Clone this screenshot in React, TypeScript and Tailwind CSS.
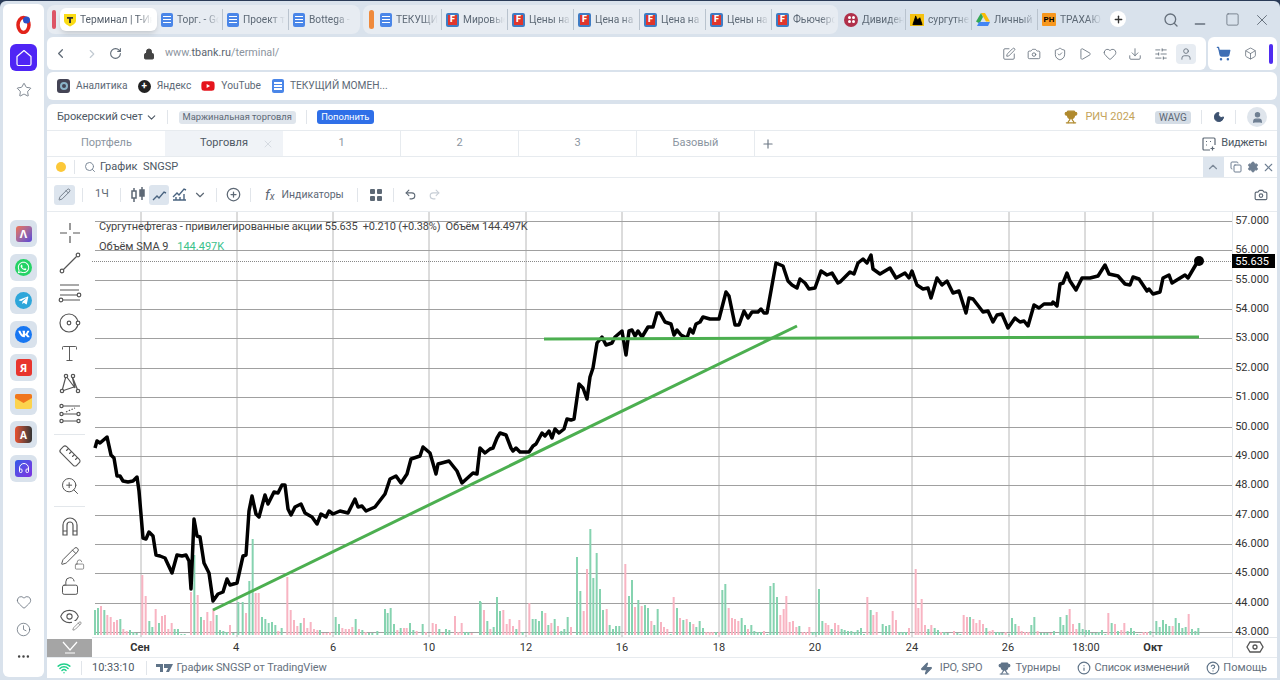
import {
  ChevronLeft, ChevronRight, ChevronDown, ChevronUp, RotateCw, Lock, SquarePen, Camera, ShieldCheck, Play, Heart,
  Download, SlidersHorizontal, User, ShoppingCart, Box, Search, Minus, Square, X, Plus, Star, Clock, Moon,
  Trophy, Copy, Settings, Pencil, Undo2, Redo2, Wifi, Zap, Info, CircleHelp, Type, ZoomIn, Ruler, LockOpen,
  Eye, CirclePlus, MoreHorizontal, Headphones, Mountain,
} from "lucide-react";
import { FaWhatsapp, FaTelegramPlane, FaVk, FaYoutube } from "react-icons/fa";

const termFont = "font-['Roboto',sans-serif]";

const linePts = "95,447 97,440 100,442 107,436 111,454 114,457 117,475 120,475 123,480 128,481 133,480 137,476 139,490 143,537 146,538 149,531 153,535 156,554 160,555 165,557 172,572 177,554 182,555 186,554 189,560 191,588 194,518 197,535 200,536 204,562 209,572 213,600 218,593 223,591 227,578 230,584 237,582 243,555 246,554 249,510 252,495 256,513 259,516 265,494 268,503 274,491 278,492 282,484 285,484 288,508 291,514 295,506 301,503 305,512 312,516 317,523 321,513 326,516 329,510 333,513 340,510 348,512 355,498 358,506 362,505 366,510 375,506 385,493 390,478 396,475 401,482 407,473 411,458 420,455 423,446 430,452 436,473 438,463 449,460 457,470 462,482 473,472 477,473 480,447 485,452 490,448 493,447 497,437 500,432 506,434 511,447 513,450 516,447 520,451 529,451 533,445 536,443 542,432 545,435 549,430 552,437 555,428 559,432 564,428 567,418 571,419 574,418 579,383 583,387 587,398 590,376 593,367 597,342 602,336 606,344 612,342 615,336 622,330 626,354 629,330 632,329 635,335 638,330 642,336 648,326 653,326 657,312 660,312 665,321 671,323 674,334 677,329 681,334 687,337 690,328 693,332 696,323 700,321 703,316 710,318 719,318 726,291 729,295 735,324 739,324 744,310 748,317 752,311 758,311 761,308 764,312 767,312 776,262 783,265 788,280 792,284 797,287 800,278 805,282 809,288 815,287 821,270 827,274 832,272 838,282 840,281 850,271 854,273 858,262 863,258 867,262 871,254 873,268 880,273 890,267 896,277 905,272 909,277 912,270 917,284 923,288 928,287 931,297 937,277 942,284 947,280 953,292 959,290 966,312 969,297 973,298 983,311 988,310 993,321 997,314 1002,313 1008,327 1015,317 1020,321 1024,320 1028,325 1034,304 1039,307 1044,303 1052,303 1053,301 1057,305 1060,283 1063,282 1067,272 1070,280 1076,289 1082,277 1090,277 1098,275 1105,264 1109,273 1118,275 1125,283 1130,284 1133,276 1139,278 1147,290 1149,288 1153,293 1160,291 1163,277 1169,274 1172,282 1185,274 1188,277 1198,260";

// volume bars: [x in 3x crop, height], negative = red candle
const barsA = [[15,25],[24,27],[33,-29],[43,25],[52,-20],[62,-18],[72,-13],[81,-15],[91,16],[100,-6],[110,-4],[120,5],[130,3],[140,2],[157,-60],[167,-39],[178,14],[187,8],[197,-26],[207,12],[216,-19],[225,-20],[235,-6],[245,-12],[254,6],[264,6],[274,1],[284,1],[303,-43],[313,80],[323,-40],[333,18],[342,-15],[352,-23],[362,-14],[370,-26],[380,20],[390,5],[400,4],[410,3],[420,-10],[430,2],[445,33],[458,33],[468,-22],[478,54],[488,96],[497,-42],[506,-42],[516,18],[526,16],[536,12],[546,13],[556,10],[565,-4],[575,7],[592,-58],[602,-25],[612,-15],[622,-9],[632,12],[642,-17],[652,-7],[662,-13],[672,-6],[682,-5],[690,5],[700,-2],[710,-2],[720,-3],[737,18],[747,11],[757,-7],[767,-6],[777,-6],[787,-8],[797,16],[807,-6],[817,5],[827,-3],[837,2],[847,2],[862,4],[885,26],[893,22],[902,27],[912,11],[922,-5],[932,7],[942,-7],[950,-7],[960,12],[970,5],[980,-4],[998,11],[1008,-3],[1028,-12],[1038,-11],[1048,6],[1058,-2],[1068,6],[1078,5],[1095,-19],[1105,-3],[1115,-12],[1125,3],[1135,3],[1145,-2],[1172,33],[1182,-23]];
const barsB = [[0,34],[12,-25],[22,14],[31,-6],[41,8],[51,38],[60,24],[70,-25],[80,-11],[89,-16],[99,-9],[109,6],[118,-15],[128,3],[148,-32],[158,16],[167,16],[177,14],[186,24],[196,-22],[205,10],[214,-12],[224,16],[234,-9],[244,4],[253,6],[263,18],[273,-8],[291,78],[301,44],[311,-24],[321,-66],[331,106],[340,57],[350,82],[360,46],[369,25],[380,-26],[389,10],[399,6],[408,9],[418,9],[436,-71],[447,39],[456,55],[465,-28],[475,35],[485,-29],[495,30],[504,27],[514,-14],[523,10],[533,26],[543,-13],[552,-8],[562,-6],[572,1],[581,-38],[591,27],[600,-17],[610,15],[620,-16],[630,13],[640,-11],[649,8],[659,14],[669,7],[679,-3],[689,-3],[698,-3],[708,3],[718,-3],[727,45],[736,51],[746,-27],[756,-17],[765,-16],[775,-14],[785,17],[795,10],[804,-6],[814,10],[823,4],[833,3],[843,3],[852,-4],[862,1],[871,49],[881,52],[891,38],[901,-20],[911,-26],[919,-39],[929,-13],[939,-14],[949,-8],[958,9],[968,-3],[978,-3],[988,-8],[998,3],[1007,3],[1017,46],[1027,14],[1037,-12],[1045,-10],[1055,6],[1065,-12],[1075,-10],[1085,6],[1094,5],[1104,4],[1114,4],[1124,3],[1133,5],[1143,7],[1152,1],[1162,-38],[1172,25],[1180,-20],[1190,-23]];
const barsC = [[8,11],[18,9],[28,10],[38,-24],[48,-15],[58,3],[68,3],[78,3],[87,-7],[107,-66],[115,-27],[125,-36],[135,-10],[145,6],[154,-10],[164,7],[174,5],[183,-3],[193,3],[203,2],[222,-4],[232,2],[241,1],[251,-20],[261,-18],[270,18],[280,-16],[289,-12],[299,-15],[309,-11],[319,7],[329,-4],[338,-5],[348,3],[358,3],[367,2],[377,-3],[387,1],[396,17],[406,11],[416,-9],[425,-4],[435,-3],[445,-3],[454,10],[463,18],[473,-4],[483,2],[493,2],[502,2],[512,-2],[522,4],[541,18],[550,10],[560,20],[569,-26],[579,-11],[589,-6],[598,12],[608,6],[618,5],[627,5],[637,2],[647,2],[656,3],[666,5],[676,1],[685,-22],[695,12],[705,-11],[714,4],[724,-5],[733,-12],[743,4],[753,7],[762,4],[772,1],[781,-1],[791,-3],[801,-3],[811,4],[829,14],[839,8],[849,15],[858,11],[868,9],[878,-9],[887,17],[897,12],[907,7],[917,8],[926,-21],[936,6],[946,4],[955,7]];
const volumeBars = [
  ...barsA.map(([x, h]) => ({ x: 90 + x / 3, h })),
  ...barsB.map(([x, h]) => ({ x: 480 + x / 3, h })),
  ...barsC.map(([x, h]) => ({ x: 880 + x / 3, h })),
];

const priceLevels = [57, 56, 55, 54, 53, 52, 51, 50, 49, 48, 47, 46, 45, 44, 43];
const timeLines = [141, 237, 333, 429, 526, 622, 719, 816, 912, 1009, 1085, 1153];
const timeLabels = [
  { x: 140, t: "Сен", bold: true }, { x: 236, t: "4" }, { x: 333, t: "6" }, { x: 429, t: "10" }, { x: 526, t: "12" },
  { x: 622, t: "16" }, { x: 719, t: "18" }, { x: 815, t: "20" }, { x: 912, t: "24" }, { x: 1008, t: "26" },
  { x: 1086, t: "18:00" }, { x: 1153, t: "Окт", bold: true },
];

const DocIcon = () => (
  <span className="flex h-[14px] w-[12px] shrink-0 flex-col justify-center gap-[1.5px] rounded-[2px] bg-[#4a86e8] px-[2px]">
    <span className="h-[1.5px] bg-white" />
    <span className="h-[1.5px] bg-white" />
    <span className="h-[1.5px] bg-white" />
  </span>
);

const FinIcon = () => (
  <span className="flex h-[14px] w-[13px] shrink-0 items-center justify-center rounded-[2px] border-2 border-[#3f7cc4] bg-[#e0352c] text-[9px] font-black leading-none text-white">
    F
  </span>
);

const TBankIcon = () => (
  <svg width="14" height="14" viewBox="0 0 14 14" className="shrink-0">
    <path d="M1 1h12v6.500c0 3-3 4.500-6 6-3-1.500-6-3-6-6z" fill="#fadb14" />
    <path d="M4 4h6v1.800H8v4.200H6V5.800H4z" fill="#333" />
  </svg>
);

const DividendIcon = () => (
  <span className="grid h-[14px] w-[14px] shrink-0 grid-cols-2 place-items-center rounded-full bg-[#b0304a] p-[3px]">
    <span className="h-[3px] w-[3px] rounded-full bg-white" />
    <span className="h-[3px] w-[3px] rounded-full bg-white" />
    <span className="h-[3px] w-[3px] rounded-full bg-white" />
    <span className="h-[3px] w-[3px] rounded-full bg-white" />
  </span>
);

const ImageIcon = () => (
  <span className="flex h-[12px] w-[14px] shrink-0 items-end justify-center overflow-hidden bg-[#f6c20f]">
    <Mountain size={11} className="text-black" fill="black" />
  </span>
);

const DriveIcon = () => (
  <svg width="14" height="13" viewBox="0 0 14 13" className="shrink-0">
    <path d="M5 0h4l5 8.500h-4z" fill="#fbbc04" />
    <path d="M5 0l2 4-3.500 6.500L0 8.500 z" fill="#34a853" />
    <path d="M3 9h11l-2 4H1z" fill="#4285f4" />
  </svg>
);

const PhIcon = () => (
  <span className="flex h-[13px] w-[14px] shrink-0 items-center justify-center rounded-[1px] bg-[#f7971d] text-[8px] font-bold leading-none text-black">
    PH
  </span>
);

const Tab = ({ icon, text, last = false }: { icon: React.ReactNode; text: string; last?: boolean }) => (
  <div className={`flex h-[21px] w-[66px] shrink-0 items-center gap-[4px] pl-[4px] ${last ? "" : "border-r border-[#b9c3ce]"}`}>
    {icon}
    <span className="w-[42px] overflow-hidden whitespace-nowrap text-[10.200px] text-[#5d6976] [mask-image:linear-gradient(to_right,black_65%,transparent)]">
      {text}
    </span>
  </div>
);

const TabStrip = () => (
  <div className={`flex h-[36px] items-start pt-[4px] ${termFont}`}>
    <div className="flex h-[29px] w-[313px] items-center rounded-lg bg-[#e7ecf2] pl-[5px]">
      <span className="h-[19px] w-[4px] rounded-sm bg-[#dd5566]" />
      <div className="ml-[4px] flex h-[23px] w-[97px] items-center gap-[3px] rounded-md bg-white pl-[3px] shadow-md">
        <TBankIcon />
        <span className="w-[72px] overflow-hidden whitespace-nowrap text-[10.200px] text-[#555f6b] [mask-image:linear-gradient(to_right,black_80%,transparent)]">
          Терминал | Т-Инвест
        </span>
      </div>
      <Tab icon={<DocIcon />} text="Торг. - Google" />
      <Tab icon={<DocIcon />} text="Проект торг" />
      <Tab icon={<DocIcon />} text="Bottega -" last />
    </div>
    <div className="ml-[3px] flex h-[29px] w-[475px] items-center rounded-lg bg-[#e7ecf2] pl-[6px]">
      <span className="mr-[2px] h-[19px] w-[5px] rounded-sm bg-[#ef8a3c]" />
      <Tab icon={<DocIcon />} text="ТЕКУЩИЙ" />
      <Tab icon={<FinIcon />} text="Мировые" />
      <Tab icon={<FinIcon />} text="Цены на" />
      <Tab icon={<FinIcon />} text="Цена на" />
      <Tab icon={<FinIcon />} text="Цена на" />
      <Tab icon={<FinIcon />} text="Цены на" />
      <Tab icon={<FinIcon />} text="Фьючерс" last />
    </div>
    <div className="ml-[2px] flex h-[29px] items-center">
      <Tab icon={<DividendIcon />} text="Дивиденд" />
      <Tab icon={<ImageIcon />} text="сургутнеф" />
      <Tab icon={<DriveIcon />} text="Личный" />
      <Tab icon={<PhIcon />} text="ТРАХАЮ" last />
    </div>
    <div className="ml-[6px] mt-[6px] flex h-[16px] w-[16px] items-center justify-center rounded-full bg-white">
      <Plus size={11} strokeWidth={3} className="text-[#333]" />
    </div>
    <div className="ml-auto flex h-[29px] items-center pr-[6px] text-[#66707c]">
      <Search size={16} />
      <Minus size={16} className="ml-[13px] translate-y-[4px]" />
      <Square size={15} strokeWidth={1.3} className="ml-[17px]" />
      <X size={18} strokeWidth={1.3} className="ml-[13px]" />
    </div>
  </div>
);

const AddressBar = () => (
  <div className={`flex h-[33px] gap-[2px] ${termFont}`}>
    <div className="flex flex-1 items-center rounded-md bg-white text-[#5f6a76]">
      <ChevronLeft size={15} className="ml-[6px]" strokeWidth={2} />
      <ChevronRight size={14} className="ml-[17px] text-[#c2cad2]" />
      <RotateCw size={13} className="ml-[10px]" strokeWidth={2} />
      <Lock size={12} className="ml-[21px] text-[#444]" fill="#444" />
      <span className="ml-[10px] text-[10.800px] text-[#8b949e]">
        www.<span className="text-[#5b6570]">tbank.ru</span>/terminal/
      </span>
      <div className="ml-auto flex items-center gap-[11.300px] pr-[10px]">
        <SquarePen size={14} strokeWidth={1.4} />
        <Camera size={14} strokeWidth={1.4} />
        <ShieldCheck size={14} strokeWidth={1.4} />
        <Play size={14} strokeWidth={1.4} />
        <Heart size={14} strokeWidth={1.4} />
        <Download size={14} strokeWidth={1.4} />
        <SlidersHorizontal size={14} strokeWidth={1.4} />
        <span className="-ml-[3px] flex h-[20px] w-[20px] items-center justify-center rounded bg-[#e7ecf2]">
          <User size={14} strokeWidth={1.4} />
        </span>
      </div>
    </div>
    <div className="flex w-[69px] items-center rounded-md bg-white pl-[8px] text-[#5f6a76]">
      <ShoppingCart size={15} className="text-[#3f6fb5]" fill="#3f6fb5" />
      <Box size={13} strokeWidth={1.4} className="ml-[13px]" />
      <span className="ml-[12px] h-[20px] w-[4px] rounded-sm bg-[#4f2cf0]" />
    </div>
  </div>
);

const BookmarkBar = () => (
  <div className={`mt-[2px] flex h-[28px] items-center gap-[6px] rounded-md bg-white pl-[10px] text-[10.200px] text-[#5d6976] ${termFont}`}>
    <span className="flex h-[14px] w-[13px] items-center justify-center rounded-[3px] bg-[#445]">
      <span className="h-[8px] w-[8px] rounded-full border-2 border-[#8bb5c9]" />
    </span>
    <span>Аналитика</span>
    <span className="ml-[4px] flex h-[13px] w-[13px] items-center justify-center rounded-full bg-[#222] text-[10px] font-bold leading-none text-white">+</span>
    <span>Яндекс</span>
    <FaYoutube size={14} className="ml-[4px] text-[#e5141c]" />
    <span>YouTube</span>
    <span className="ml-[5px]"><DocIcon /></span>
    <span>ТЕКУЩИЙ МОМЕН...</span>
  </div>
);

const AppButton = ({ children }: { children: React.ReactNode }) => (
  <div className="flex h-[27px] w-[27px] items-center justify-center rounded-md bg-[#d9e2ec]">{children}</div>
);

const Sidebar = () => (
  <aside className="ml-[3px] mr-[3px] mt-[3px] flex h-[673px] w-[41px] shrink-0 flex-col items-center rounded-md bg-white pt-[10px] text-[#5f6a76]">
    <svg width="16" height="20" viewBox="0 0 16 20">
      <ellipse cx="7.500" cy="11" rx="5.500" ry="7.500" fill="none" stroke="#e2231a" strokeWidth="3.500" />
      <circle cx="10.500" cy="6" r="3.500" fill="#2b50c8" />
    </svg>
    <div className="mt-[10px] flex h-[27px] w-[27px] items-center justify-center rounded-md bg-[#4f25f5]">
      <svg width="16" height="18" viewBox="0 0 16 18" fill="none" stroke="white" strokeWidth="1.200" strokeLinejoin="round">
        <path d="M1 7.500 8 1.500l7 6V15a1.500 1.500 0 0 1-1.500 1.500h-11A1.500 1.500 0 0 1 1 15z" />
      </svg>
    </div>
    <Star size={16} strokeWidth={1.2} className="mt-[11px]" />
    <div className="mt-[122px] flex flex-col gap-[6.500px]">
      <AppButton>
        <span className="flex h-[16px] w-[16px] items-center justify-center rounded-[3px] bg-gradient-to-br from-[#f0704a] to-[#5a3fd8] text-[11px] font-bold leading-none text-white">Λ</span>
      </AppButton>
      <AppButton><span className="flex h-[17px] w-[17px] items-center justify-center rounded-full bg-[#25d366]"><FaWhatsapp size={13} className="text-white" /></span></AppButton>
      <AppButton><span className="flex h-[17px] w-[17px] items-center justify-center rounded-full bg-[#2ea6da]"><FaTelegramPlane size={11} className="text-white" /></span></AppButton>
      <AppButton><span className="flex h-[17px] w-[17px] items-center justify-center rounded-full bg-[#1877f2]"><FaVk size={12} className="text-white" /></span></AppButton>
      <AppButton><span className="flex h-[17px] w-[16px] items-center justify-center rounded-[3px] bg-[#e8352e] text-[11px] font-bold leading-none text-white">Я</span></AppButton>
      <AppButton>
        <svg width="17" height="15" viewBox="0 0 17 15">
          <rect width="17" height="15" rx="2" fill="#fcd34d" />
          <path d="M0 2a2 2 0 0 1 2-2h13a2 2 0 0 1 2 2v2l-8.500 5L0 4z" fill="#f0761e" />
        </svg>
      </AppButton>
      <AppButton><span className="flex h-[17px] w-[17px] items-center justify-center rounded-[4px] bg-gradient-to-r from-[#e8502e] to-[#333] text-[10px] font-bold leading-none text-white">A</span></AppButton>
      <AppButton><span className="flex h-[17px] w-[17px] items-center justify-center rounded-[3px] bg-gradient-to-br from-[#2c5be8] to-[#7c2fe0]"><Headphones size={12} className="text-white" /></span></AppButton>
    </div>
    <Heart size={16} strokeWidth={1.2} className="mt-auto" />
    <Clock size={15} strokeWidth={1.2} className="mt-[12px]" />
    <MoreHorizontal size={15} className="mb-[13px] mt-[12px] text-[#444]" />
  </aside>
);

const ToolIcon = ({ children }: { children: React.ReactNode }) => (
  <div className="flex h-[30px] shrink-0 items-center justify-center text-[#555]">{children}</div>
);

const toolSvg = { width: 24, height: 24, viewBox: "0 0 24 24", fill: "none", stroke: "currentColor", strokeWidth: 1.2 };

const ToolColumn = () => (
  <div className="flex w-[45px] shrink-0 flex-col pt-[6px]">
    <ToolIcon>
      <svg {...toolSvg}><path d="M2 12h7M15 12h7M12 2v7M12 15v7" /></svg>
    </ToolIcon>
    <ToolIcon>
      <svg {...toolSvg}><path d="M5.500 18.500 18.500 5.500" /><circle cx="4" cy="20" r="1.800" /><circle cx="20" cy="4" r="1.800" /></svg>
    </ToolIcon>
    <ToolIcon>
      <svg {...toolSvg}><path d="M2 4h19M2 9h19M2 14h17M5 19h17" /><circle cx="21" cy="14" r="1.800" /><circle cx="3" cy="19" r="1.800" /></svg>
    </ToolIcon>
    <ToolIcon>
      <svg {...toolSvg}><circle cx="11" cy="12" r="9" /><circle cx="11" cy="12" r="1.800" /><circle cx="20" cy="12" r="1.800" fill="white" /></svg>
    </ToolIcon>
    <ToolIcon><Type size={21} strokeWidth={1.1} /></ToolIcon>
    <ToolIcon>
      <svg {...toolSvg}><path d="M4 20 8 5l9 12-3-12 6 15M4 20l12-4" /><circle cx="4" cy="20" r="1.700" fill="white" /><circle cx="8" cy="5" r="1.700" fill="white" /><circle cx="15" cy="5" r="1.700" fill="white" /><circle cx="20" cy="20" r="1.700" fill="white" /></svg>
    </ToolIcon>
    <ToolIcon>
      <svg {...toolSvg}><path d="M5 5h17M5 13h14M5 20h14" /><path d="M8 11l9-4" strokeDasharray="1.500 1.500" /><circle cx="3.500" cy="5" r="1.600" /><circle cx="3.500" cy="13" r="1.600" /><circle cx="3.500" cy="20" r="1.600" /><circle cx="20.500" cy="13" r="1.600" /><circle cx="20.500" cy="20" r="1.600" /></svg>
    </ToolIcon>
    <div className="mx-[7px] mb-[6px] mt-[6px] h-px shrink-0 bg-[#e3e7eb]" />
    <ToolIcon><Ruler size={24} strokeWidth={1.1} /></ToolIcon>
    <ToolIcon><ZoomIn size={20} strokeWidth={1.2} /></ToolIcon>
    <div className="mx-[7px] mb-[4px] mt-[5px] h-px shrink-0 bg-[#e3e7eb]" />
    <ToolIcon>
      <svg {...toolSvg}><path d="M5 21V11a7 7 0 0 1 14 0v10h-4V11a3 3 0 0 0-6 0v10zM5 17h4M15 17h4" /></svg>
    </ToolIcon>
    <ToolIcon>
      <div className="relative">
        <Pencil size={20} strokeWidth={1.2} />
        <LockOpen size={11} strokeWidth={1.4} className="absolute -bottom-[4px] -right-[5px] bg-white" />
      </div>
    </ToolIcon>
    <ToolIcon><LockOpen size={20} strokeWidth={1.2} /></ToolIcon>
    <ToolIcon>
      <div className="relative">
        <Eye size={21} strokeWidth={1.2} />
        <Pencil size={10} strokeWidth={1.4} className="absolute -bottom-[4px] -right-[2px] bg-white" />
      </div>
    </ToolIcon>
    <div className="mt-auto flex h-[18px] shrink-0 items-center justify-center bg-[#a5a5a5] text-white">
      <svg width="18" height="14" viewBox="0 0 18 14" fill="none" stroke="currentColor" strokeWidth="1.200">
        <path d="M2 1l7 8 7-8M4 12h10" />
      </svg>
    </div>
  </div>
);

// drawn in page coordinates so the numbers above stay readable
const Chart = () => (
  <svg width="1185" height="445" viewBox="92 211 1185 445" className="block shrink-0">
    {timeLines.map((x) => (
      <line key={x} x1={x} y1={211} x2={x} y2={636} stroke="#b8b8b8" />
    ))}
    {priceLevels.map((p) => {
      const y = Math.round(220 + (57 - p) * 29.36) + 0.5;
      return <line key={p} x1={95} y1={y} x2={1232} y2={y} stroke="#a0a0a0" />;
    })}
    <line x1={92} y1={260.5} x2={1232} y2={260.5} stroke="#888" strokeDasharray="1 1" />
    {volumeBars.map((b) => (
      <rect key={b.x} x={b.x - 1} y={634 - Math.abs(b.h)} width={2} height={Math.abs(b.h)} fill={b.h < 0 ? "#f8b4c2" : "#86d3b0"} />
    ))}
    <polyline points={linePts} fill="none" stroke="#000" strokeWidth={3.5} strokeLinejoin="round" />
    <line x1={213} y1={609} x2={797} y2={325} stroke="#4caf50" strokeWidth={3} />
    <line x1={544} y1={338} x2={1199} y2={336} stroke="#4caf50" strokeWidth={3} />
    <circle cx={1199} cy={260} r={5} fill="#000" />
    <line x1={1232.5} y1={211} x2={1232.5} y2={656} stroke="#e3e7eb" />
    <line x1={92} y1={636.5} x2={1277} y2={636.5} stroke="#e3e7eb" />
    <g fontFamily="Roboto, sans-serif" fontSize="11" fill="#333">
      {priceLevels.map((p) => (
        <text key={p} x={1269} y={Math.round(220 + (57 - p) * 29.36) + 3} textAnchor="end">{p}.000</text>
      ))}
      {timeLabels.map((l) => (
        <text key={l.t + l.x} x={l.x} y={650} textAnchor="middle" fontWeight={l.bold ? 700 : 400}>{l.t}</text>
      ))}
    </g>
    <rect x={1232} y={253} width={43} height={14} fill="#000" />
    <text x={1269} y={264} textAnchor="end" fontFamily="Roboto, sans-serif" fontSize="11" fill="#fff">55.635</text>
    <path d="M1250 641h10l3 5-3 5h-10l-3-5z" fill="none" stroke="#555" strokeWidth="1.300" />
    <circle cx={1255} cy={646} r={2} fill="none" stroke="#555" strokeWidth="1.300" />
  </svg>
);

const Sep = ({ className = "" }: { className?: string }) => <span className={`h-[14px] w-px shrink-0 bg-[#e1e5ea] ${className}`} />;

const Terminal = () => (
  <div className={`mt-[4px] flex h-[574px] flex-col rounded-t-md bg-white text-[#4d5864] ${termFont}`}>
    {/* account row */}
    <div className="flex h-[27px] shrink-0 items-center border-b border-[#e7ebef] pl-[10px] pr-[10px]">
      <span className="whitespace-nowrap text-[11px] tracking-[-0.1px] text-[#4d5864]">Брокерский счет</span>
      <ChevronDown size={13} className="ml-[2px]" />
      <Sep className="ml-[9px]" />
      <span className="ml-[11px] flex h-[13px] w-[117px] shrink-0 items-center justify-center whitespace-nowrap rounded-[3px] bg-[#dfe5ec] text-[9.300px] text-[#5d6875]">Маржинальная торговля</span>
      <Sep className="ml-[10px]" />
      <span className="ml-[10px] flex h-[14px] w-[57px] shrink-0 items-center justify-center rounded-[3px] bg-[#2f6fe8] text-[9.300px] text-white">Пополнить</span>
      <Trophy size={14} className="ml-auto text-[#b08a2e]" fill="#b08a2e" />
      <span className="ml-[7px] whitespace-nowrap text-[11px] text-[#c4a35a]">РИЧ 2024</span>
      <span className="ml-[20px] flex h-[13px] w-[36px] items-center justify-center rounded-[3px] bg-[#d5dde6] text-[10px] text-[#5d6875]">WAVG</span>
      <Sep className="ml-[10px]" />
      <Moon size={12} className="ml-[11px] text-[#3d5270]" fill="#3d5270" />
      <Sep className="ml-[10px]" />
      <span className="ml-[11px] flex h-[20px] w-[20px] items-center justify-center rounded-full bg-[#dfe5ec]">
        <User size={13} className="text-[#6f7f92]" fill="#6f7f92" />
      </span>
    </div>
    {/* workspace tabs */}
    <div className="flex h-[26px] shrink-0 items-center border-b border-[#e7ebef] text-[11px]">
      <span className="flex h-full w-[118px] items-center pl-[34px] text-[#8b95a1]">Портфель</span>
      <span className="relative flex h-full w-[118px] items-center justify-center bg-[#f0f3f7] text-[#4d5864]">
        Торговля
        <X size={12} strokeWidth={1.2} className="absolute right-[9px] text-[#c3cad2]" />
      </span>
      {["1", "2", "3", "Базовый"].map((t) => (
        <span key={t} className="flex h-full w-[118px] items-center justify-center border-r border-[#e7ebef] text-[#8b95a1]">{t}</span>
      ))}
      <Plus size={14} className="ml-[6px] text-[#6d7885]" />
      <span className="ml-auto mr-[10px] flex items-center gap-[5px] tracking-[-0.3px] text-[#4d5864]">
        <svg width="14" height="14" viewBox="0 0 14 14" fill="none" stroke="#5d6875" strokeWidth="1.200">
          <path d="M8 13H2a1 1 0 0 1-1-1V2a1 1 0 0 1 1-1h10a1 1 0 0 1 1 1v6" />
          <path d="M4 4.500h1M8 4.500h1M4 8h1M10.500 9.500v4M8.500 11.500h4" />
        </svg>
        Виджеты
      </span>
    </div>
    {/* widget header */}
    <div className="flex h-[21px] shrink-0 items-center border-b border-[#e7ebef] pl-[9px]">
      <span className="h-[10px] w-[10px] rounded-full bg-[#fcc838]" />
      <Sep className="ml-[8px]" />
      <Search size={12} className="ml-[9px] text-[#7d8a99]" />
      <span className="ml-[4px] text-[11px]">График&nbsp; SNGSP</span>
      <span className="ml-auto flex h-full w-[21px] items-center justify-center bg-[#dde5ee]">
        <ChevronUp size={14} className="text-[#7d8a99]" />
      </span>
      <Copy size={12} className="ml-[6px] text-[#6f7f92]" />
      <Settings size={12} className="ml-[5px] text-[#6f7f92]" fill="#6f7f92" />
      <X size={13} className="ml-[3.500px] mr-[2px] text-[#6f7f92]" />
    </div>
    {/* chart toolbar */}
    <div className="flex h-[34px] shrink-0 items-center border-b border-[#e7ebef] pl-[7px] text-[#5d6875]">
      <span className="flex h-[20px] w-[21px] items-center justify-center rounded-[3px] bg-[#dde5ee]">
        <Pencil size={13} strokeWidth={1.5} />
      </span>
      <Sep className="ml-[7px]" />
      <span className="ml-[12px] w-[13px] text-[11px]">1Ч</span>
      <Sep className="ml-[12px]" />
      <svg width="16" height="16" viewBox="0 0 16 16" className="ml-[9px]" fill="none" stroke="currentColor" strokeWidth="1.500">
        <path d="M4 1v14M12 0v13" /><rect x="2" y="4" width="4" height="7" fill="white" /><rect x="10" y="3" width="4" height="6" fill="currentColor" />
      </svg>
      <span className="ml-[3px] flex h-[20px] w-[20px] items-center justify-center rounded-[3px] bg-[#dde5ee]">
        <svg width="15" height="12" viewBox="0 0 15 12" fill="none" stroke="#4a6480" strokeWidth="1.400"><path d="M1 11l4-4 2 2 5-6 2 1" /></svg>
      </span>
      <svg width="15" height="13" viewBox="0 0 15 13" className="ml-[3px]" fill="none" stroke="#4a6480" strokeWidth="1.400">
        <path d="M1 9l4-4 2 2 5-6 2 1M1 12h13M4 12V9M8 12V9M12 12V6" />
      </svg>
      <ChevronDown size={14} className="ml-[6px]" />
      <Sep className="ml-[9px]" />
      <CirclePlus size={15} className="ml-[9px]" />
      <Sep className="ml-[9px]" />
      <span className="ml-[14px] text-[14px] italic leading-none">f<span className="text-[10px]">x</span></span>
      <span className="ml-[7px] text-[10.500px]">Индикаторы</span>
      <Sep className="ml-[13px]" />
      <span className="ml-[12px] grid grid-cols-2 gap-[2px]">
        <span className="h-[5px] w-[5px] rounded-[1px] bg-[#5d6875]" />
        <span className="h-[5px] w-[5px] rounded-[1px] bg-[#5d6875]" />
        <span className="h-[5px] w-[5px] rounded-[1px] bg-[#5d6875]" />
        <span className="h-[5px] w-[5px] rounded-[1px] bg-[#5d6875]" />
      </span>
      <Sep className="ml-[11px]" />
      <Undo2 size={13} className="ml-[10px]" />
      <Redo2 size={13} className="ml-[11px] text-[#c7ced6]" />
      <Camera size={14} className="ml-auto mr-[9px]" />
    </div>
    {/* chart */}
    <div className="relative flex h-[445px] shrink-0 items-stretch">
      <ToolColumn />
      <Chart />
      <div className="absolute left-[52px] top-[8px] whitespace-pre text-[11px] leading-[14px] tracking-[-0.15px] text-[#444]">
        {"Сургутнефтегаз - привилегированные акции 55.635  +0.210 (+0.38%)  Объём 144.497K"}
      </div>
      <div className="absolute left-[52px] top-[28px] whitespace-nowrap text-[11px] leading-[14px] text-[#444]">
        Объём SMA 9 <span className="ml-[6px] text-[#3ac28c]">144.497K</span>
      </div>
    </div>
    {/* status bar */}
    <div className="flex h-[21px] shrink-0 items-center border-t border-[#e7ebef] text-[11px] text-[#66717e]">
      <Wifi size={14} strokeWidth={2.500} className="ml-[10px] text-[#1fd18b]" />
      <Sep className="ml-[10px]" />
      <span className="ml-[10px] text-[#4d5864]">10:33:10</span>
      <Sep className="ml-[12px]" />
      <svg width="17" height="9" viewBox="0 0 17 9" className="ml-[9px]" fill="#5f7388">
        <path d="M0 0h7v8H4V3H0zM8 0h9l-4 8h-3l2-4H8z" />
      </svg>
      <span className="ml-[3px] tracking-[-0.1px]">График SNGSP от TradingView</span>
      <Zap size={13} className="ml-auto text-[#5f7388]" fill="#5f7388" />
      <span className="ml-[7px]">IPO, SPO</span>
      <Trophy size={13} className="ml-[15px] text-[#5f7388]" fill="#5f7388" />
      <span className="ml-[5px]">Турниры</span>
      <Info size={14} className="ml-[16px] text-[#5f7388]" />
      <span className="ml-[4px] tracking-[-0.18px]">Список изменений</span>
      <CircleHelp size={14} className="ml-[17px] text-[#5f7388]" />
      <span className="ml-[3px] mr-[10px]">Помощь</span>
    </div>
  </div>
);

export default function App() {
  return (
    <div className="h-[680px] w-[1280px] overflow-hidden bg-[#2a3b57] pt-px">
      <div className="flex h-[679px] rounded-t-[6px] bg-[#d9e2ec]">
        <Sidebar />
        <main className="w-[1230px] shrink-0">
          <TabStrip />
          <AddressBar />
          <BookmarkBar />
          <Terminal />
        </main>
      </div>
    </div>
  );
}
